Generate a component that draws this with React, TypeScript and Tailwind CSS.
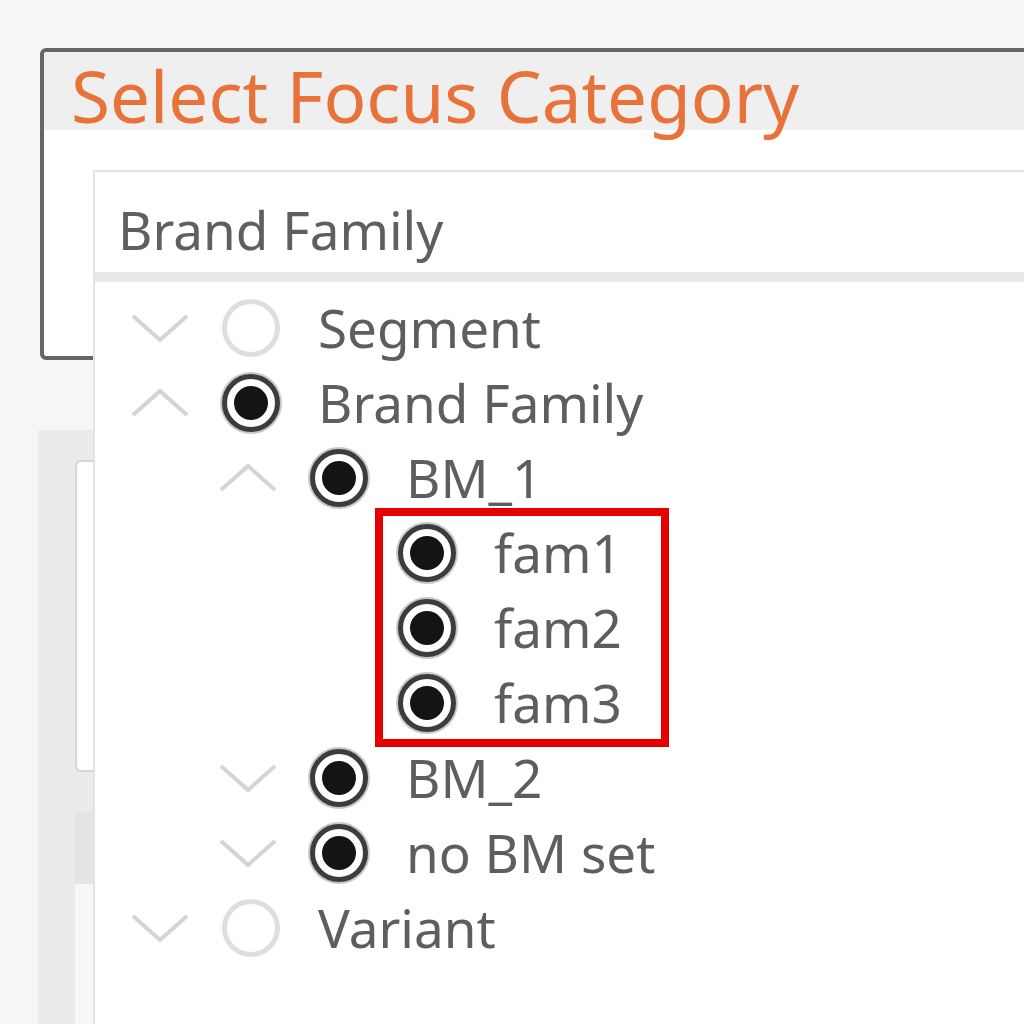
import React from 'react';

type Node = {
    label: string;
    level: number;
    checked: boolean;
    chevron: 'up' | 'down' | null;
};

const rows: Node[] = [
    { label: 'Segment', level: 0, checked: false, chevron: 'down' },
    { label: 'Brand Family', level: 0, checked: true, chevron: 'up' },
    { label: 'BM_1', level: 1, checked: true, chevron: 'up' },
    { label: 'fam1', level: 2, checked: true, chevron: null },
    { label: 'fam2', level: 2, checked: true, chevron: null },
    { label: 'fam3', level: 2, checked: true, chevron: null },
    { label: 'BM_2', level: 1, checked: true, chevron: 'down' },
    { label: 'no BM set', level: 1, checked: true, chevron: 'down' },
    { label: 'Variant', level: 0, checked: false, chevron: 'down' },
];

const indent = ['pl-[35px]', 'pl-[123px]', 'pl-[211px]'];

function Chevron({ dir }: { dir: 'up' | 'down' | null }) {
    return (
        <span className="w-[60px] h-[30px] shrink-0 flex items-center justify-center">
            {dir && (
                <svg width="60" height="30" viewBox="0 0 60 30" fill="none">
                    <polyline
                        points={dir === 'down' ? '3,3 30,27 57,3' : '3,27 30,3 57,27'}
                        stroke="#d4d4d4"
                        strokeWidth="4"
                    />
                </svg>
            )}
        </span>
    );
}

function Radio({ checked }: { checked: boolean }) {
    if (!checked) {
        return <span className="w-[58px] h-[58px] shrink-0 rounded-full border-[5px] border-[#dedede] bg-white" />;
    }
    return (
        <span className="w-[58px] h-[58px] shrink-0 rounded-full border-[5px] border-[#3c3c3c] bg-white flex items-center justify-center shadow-[0_0_0_2px_#c8c8c8]">
            <span className="w-[34px] h-[34px] rounded-full bg-[#141414]" />
        </span>
    );
}

export default function App() {
    return (
        <div className="w-[1024px] h-[1024px] overflow-hidden bg-[#f6f6f6] relative font-['Noto_Sans',sans-serif]">
            {/* Dialog behind the dropdown */}
            <div className="pt-[48px] pl-[40px]">
                <div className="w-[1100px] h-[312px] border-4 border-[#666666] rounded-[6px] bg-white">
                    <div className="h-[78px] flex items-start bg-[#efefef] rounded-t-[3px] pl-[27px]">
                        <h1 className="-mt-[9px] text-[#e8733a] text-[71px] leading-normal whitespace-nowrap">Select Focus Category</h1>
                    </div>
                </div>
            </div>

            {/* Page content under the dialog */}
            <div className="mt-[70px] ml-[38px] h-[600px] bg-[#ebebeb] pt-[30px] pl-[37px] flex flex-col">
                <div className="w-[60px] h-[312px] rounded-[6px] border-2 border-[#d6d6d6] bg-white" />
                <div className="mt-[40px] w-[60px] h-[72px] bg-[#e4e4e4]" />
                <div className="w-[60px] flex-1 bg-[#f7f7f7]" />
            </div>

            {/* Dropdown */}
            <div className="absolute left-[93px] top-[170px] w-[1000px] h-[900px] bg-white border-l-2 border-t-2 border-[#e3e3e3]">
                <div className="h-[100px] flex items-center pl-[23px] pt-[14px]">
                    <span className="text-[53px] leading-none text-[#5f5f5f]">Brand Family</span>
                </div>
                <div className="h-[10px] bg-[#e8e8e8]" />
                <div className="relative pt-[8px]">
                    {rows.map((r) => (
                        <div key={r.label} className={`h-[75px] flex items-center ${indent[r.level]}`}>
                            <Chevron dir={r.chevron} />
                            <span className="w-[32px] shrink-0" />
                            <Radio checked={r.checked} />
                            <span className="ml-[38px] text-[53px] leading-none text-[#5e5e5e] whitespace-nowrap">{r.label}</span>
                        </div>
                    ))}
                    {/* annotation box */}
                    <div className="absolute left-[280px] top-[226px] w-[294px] h-[239px] border-[8px] border-[#e60000]" />
                </div>
            </div>
        </div>
    );
}
